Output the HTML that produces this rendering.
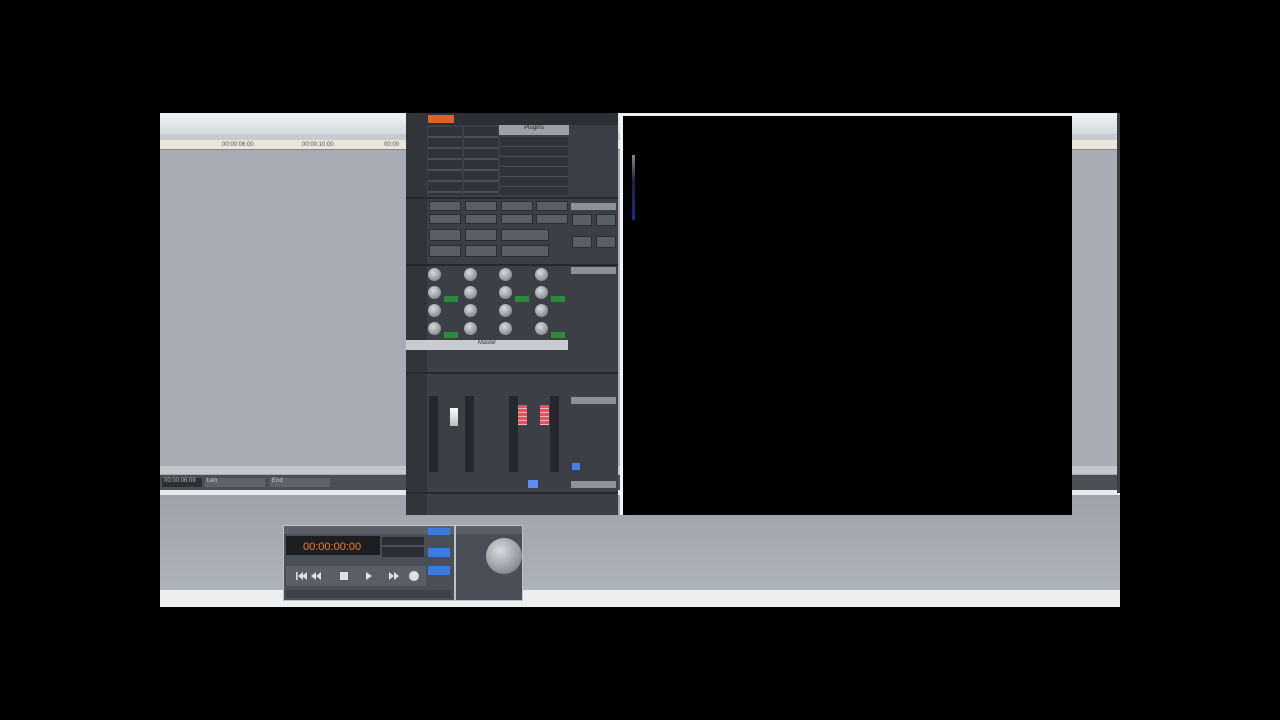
<!DOCTYPE html>
<html><head><style>
*{margin:0;padding:0;box-sizing:border-box}
body{width:1280px;height:720px;background:#000;position:relative;overflow:hidden;font-family:"Liberation Sans","DejaVu Sans",sans-serif;font-size:6px;color:#ccd}
.a{position:absolute}
.k{position:absolute;width:13px;height:13px;border-radius:50%;background:radial-gradient(circle at 40% 35%,#d8dce0,#8a9096 70%,#50555a)}
.b{position:absolute;background:#5a5f66;border:1px solid #2a2d31}
</style></head><body>
<div class="a" style="left:160px;top:113px;width:960px;height:494px;background:#a6abb3"></div>
<div class="a" style="left:160px;top:113px;width:960px;height:21px;background:linear-gradient(#eef1f4,#d6dbe0)"></div>
<div class="a" style="left:160px;top:134px;width:960px;height:6px;background:#c8ccd1"></div>
<div class="a" style="left:160px;top:140px;width:960px;height:10px;background:#ebe6dc;border-bottom:1px solid #888"></div>
<div class="a" style="left:222px;top:142px;color:#555;font-size:6px">00:00:06:00</div>
<div class="a" style="left:302px;top:142px;color:#555;font-size:6px">00:00:10:00</div>
<div class="a" style="left:384px;top:142px;color:#555;font-size:6px">00:00</div>
<div class="a" style="left:160px;top:150px;width:960px;height:316px;background:#a7acb5"></div>
<div class="a" style="left:160px;top:466px;width:960px;height:8px;background:#c4c8cd"></div>
<div class="a" style="left:160px;top:475px;width:960px;height:15px;background:#4b4f56"></div>
<div class="a" style="left:162px;top:478px;width:40px;height:9px;background:#2c2f34;color:#bbb;font-size:6px;padding-left:2px">00:00:06:09</div>
<div class="a" style="left:205px;top:478px;width:60px;height:9px;background:#5f636a;color:#ccc;padding-left:2px">Len</div>
<div class="a" style="left:270px;top:478px;width:60px;height:9px;background:#5f636a;color:#ccc;padding-left:2px">End</div>
<div class="a" style="left:160px;top:490px;width:960px;height:5px;background:#e8eaed"></div>
<div class="a" style="left:160px;top:495px;width:960px;height:95px;background:linear-gradient(#9ea3ab,#aeb2b9)"></div>
<div class="a" style="left:160px;top:590px;width:960px;height:17px;background:#eceef0"></div>
<div class="a" style="left:1117px;top:113px;width:3px;height:380px;background:#3a3d42"></div>
<!-- mixer -->
<div class="a" style="left:406px;top:113px;width:212px;height:402px;background:#3c4046"></div>
<div class="a" style="left:406px;top:113px;width:212px;height:12px;background:#2c2f33"></div>
<div class="a" style="left:428px;top:115px;width:26px;height:8px;background:#e0602a"></div>
<div class="a" style="left:406px;top:113px;width:21px;height:402px;background:#313439"></div>
<div class="a" style="left:499px;top:125px;width:70px;height:10px;background:#9ca1a8;color:#222;text-align:center">Plugins</div>
<div class="a" style="left:428px;top:127px;width:34px;height:68px;background:repeating-linear-gradient(#2f3237 0 9px,#4a4f55 9px 11px)"></div>
<div class="a" style="left:464px;top:127px;width:34px;height:68px;background:repeating-linear-gradient(#2f3237 0 9px,#4a4f55 9px 11px)"></div>
<div class="a" style="left:500px;top:137px;width:68px;height:58px;background:repeating-linear-gradient(#2f3237 0 9px,#4a4f55 9px 10px)"></div>
<div class="a" style="left:406px;top:197px;width:212px;height:2px;background:#25282c"></div>
<div class="b" style="left:429px;top:201px;width:32px;height:10px"></div>
<div class="b" style="left:465px;top:201px;width:32px;height:10px"></div>
<div class="b" style="left:501px;top:201px;width:32px;height:10px"></div>
<div class="b" style="left:536px;top:201px;width:32px;height:10px"></div>
<div class="b" style="left:429px;top:214px;width:32px;height:10px"></div>
<div class="b" style="left:465px;top:214px;width:32px;height:10px"></div>
<div class="b" style="left:501px;top:214px;width:32px;height:10px"></div>
<div class="b" style="left:536px;top:214px;width:32px;height:10px"></div>
<div class="b" style="left:429px;top:229px;width:32px;height:12px"></div>
<div class="b" style="left:465px;top:229px;width:32px;height:12px"></div>
<div class="b" style="left:501px;top:229px;width:48px;height:12px"></div>
<div class="b" style="left:429px;top:245px;width:32px;height:12px"></div>
<div class="b" style="left:465px;top:245px;width:32px;height:12px"></div>
<div class="b" style="left:501px;top:245px;width:48px;height:12px"></div>
<div class="a" style="left:571px;top:203px;width:45px;height:7px;background:#8d9299"></div>
<div class="b" style="left:572px;top:214px;width:20px;height:12px"></div>
<div class="b" style="left:596px;top:214px;width:20px;height:12px"></div>
<div class="b" style="left:572px;top:236px;width:20px;height:12px"></div>
<div class="b" style="left:596px;top:236px;width:20px;height:12px"></div>
<div class="a" style="left:406px;top:264px;width:212px;height:2px;background:#25282c"></div>
<div class="a" style="left:571px;top:267px;width:45px;height:7px;background:#8d9299"></div>
<div class="k" style="left:428px;top:268px"></div><div class="k" style="left:464px;top:268px"></div><div class="k" style="left:499px;top:268px"></div><div class="k" style="left:535px;top:268px"></div>
<div class="k" style="left:428px;top:286px"></div><div class="k" style="left:464px;top:286px"></div><div class="k" style="left:499px;top:286px"></div><div class="k" style="left:535px;top:286px"></div>
<div class="k" style="left:428px;top:304px"></div><div class="k" style="left:464px;top:304px"></div><div class="k" style="left:499px;top:304px"></div><div class="k" style="left:535px;top:304px"></div>
<div class="k" style="left:428px;top:322px"></div><div class="k" style="left:464px;top:322px"></div><div class="k" style="left:499px;top:322px"></div><div class="k" style="left:535px;top:322px"></div>
<div class="a" style="left:444px;top:296px;width:14px;height:6px;background:#2e8a3a"></div>
<div class="a" style="left:515px;top:296px;width:14px;height:6px;background:#2e8a3a"></div>
<div class="a" style="left:551px;top:296px;width:14px;height:6px;background:#2e8a3a"></div>
<div class="a" style="left:444px;top:332px;width:14px;height:6px;background:#2e8a3a"></div>
<div class="a" style="left:551px;top:332px;width:14px;height:6px;background:#2e8a3a"></div>
<div class="a" style="left:406px;top:340px;width:162px;height:10px;background:#c8ccd1;color:#333;text-align:center">Master</div>
<div class="a" style="left:406px;top:372px;width:212px;height:2px;background:#25282c"></div>
<div class="a" style="left:429px;top:396px;width:9px;height:76px;background:#24272b"></div>
<div class="a" style="left:465px;top:396px;width:9px;height:76px;background:#24272b"></div>
<div class="a" style="left:509px;top:396px;width:9px;height:76px;background:#24272b"></div>
<div class="a" style="left:550px;top:396px;width:9px;height:76px;background:#24272b"></div>
<div class="a" style="left:450px;top:408px;width:8px;height:18px;background:linear-gradient(#fff,#bbb)"></div>
<div class="a" style="left:518px;top:405px;width:9px;height:20px;background:repeating-linear-gradient(#e85060 0 3px,#ffb0b8 3px 4px)"></div>
<div class="a" style="left:540px;top:405px;width:9px;height:20px;background:repeating-linear-gradient(#e85060 0 3px,#ffb0b8 3px 4px)"></div>
<div class="a" style="left:571px;top:397px;width:45px;height:7px;background:#8d9299"></div>
<div class="a" style="left:572px;top:463px;width:8px;height:7px;background:#4a7ee8"></div>
<div class="a" style="left:528px;top:480px;width:10px;height:8px;background:#5b8ef0"></div>
<div class="a" style="left:571px;top:481px;width:45px;height:7px;background:#8d9299"></div>
<div class="a" style="left:406px;top:492px;width:212px;height:2px;background:#25282c"></div>
<!-- video -->
<div class="a" style="left:620px;top:114px;width:452px;height:401px;background:#000;border-left:3px solid #f4f4f4;border-top:2px solid #eee"></div>
<div class="a" style="left:632px;top:155px;width:3px;height:65px;background:linear-gradient(#888,#223 40%,#1a2a90)"></div>
<!-- transport -->
<div class="a" style="left:283px;top:525px;width:240px;height:76px;background:#4a4f57;border:1px solid #bfc3c8"></div>
<div class="a" style="left:284px;top:526px;width:238px;height:8px;background:#5c6068"></div>
<div class="a" style="left:286px;top:536px;width:94px;height:19px;background:#1c1e21"></div>
<div class="a" style="left:303px;top:541px;color:#f08020;font-size:11px">00:00:00:00</div>
<div class="a" style="left:382px;top:537px;width:42px;height:8px;background:#2a2d31"></div>
<div class="a" style="left:382px;top:547px;width:42px;height:10px;background:#2a2d31"></div>
<div class="a" style="left:428px;top:528px;width:22px;height:7px;background:#3c7ce0"></div>
<div class="a" style="left:428px;top:548px;width:22px;height:9px;background:#3c7ce0"></div>
<div class="a" style="left:428px;top:566px;width:22px;height:9px;background:#3c7ce0"></div>
<div class="a" style="left:286px;top:566px;width:140px;height:20px;background:#5a5f67"></div>
<svg class="a" style="left:286px;top:566px" width="140" height="20" fill="#dde1e6">
<rect x="10" y="6" width="1.5" height="8"/><path d="M17 6v8l-5-4zM21 6v8l-5-4z"/>
<path d="M30 6v8l-5-4zM35 6v8l-5-4z"/>
<rect x="54" y="6" width="8" height="8"/>
<path d="M80 6l6 4-6 4z"/>
<path d="M103 6l5 4-5 4zM108 6l5 4-5 4z"/>
<circle cx="128" cy="10" r="5"/></svg>
<div class="a" style="left:286px;top:590px;width:165px;height:8px;background:#3e4249"></div>
<div class="a" style="left:454px;top:526px;width:2px;height:74px;background:#bfc3c8"></div>
<div class="k" style="left:486px;top:538px;width:36px;height:36px"></div>
</body></html>
